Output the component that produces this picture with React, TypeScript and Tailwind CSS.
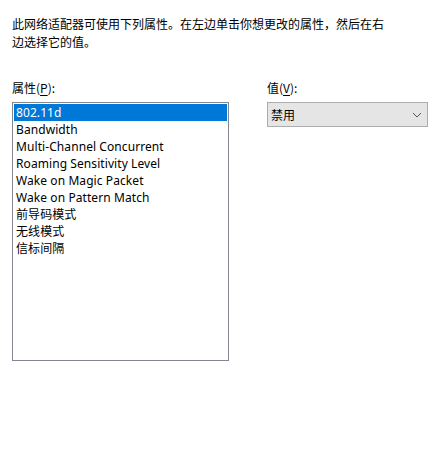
import React from "react";

const font = { fontFamily: '"Noto Sans", "Noto Sans CJK SC", sans-serif' };

const items = [
  "802.11d",
  "Bandwidth",
  "Multi-Channel Concurrent",
  "Roaming Sensitivity Level",
  "Wake on Magic Packet",
  "Wake on Pattern Match",
  "前导码模式",
  "无线模式",
  "信标间隔",
];

export default function App() {
  return (
    <div
      className="w-[441px] h-[463px] bg-white text-black text-[12px] pt-[15px] px-[12px] flex flex-col"
      style={font}
    >
      <div className="leading-[18px] w-[380px] font-['Noto_Sans_CJK_SC',sans-serif]">
        此网络适配器可使用下列属性。在左边单击你想更改的属性，然后在右边选择它的值。
      </div>
      <div className="flex mt-[28px] gap-[38px]">
        <div className="flex flex-col w-[217px]">
          <div className="leading-[18px] h-[18px] mb-[5px] font-['Noto_Sans_CJK_SC',sans-serif]">
            属性(<span className="underline underline-offset-2">P</span>):
          </div>
          <div className="h-[259px] border border-[#828790] px-[1px] pt-[1px] flex flex-col">
            {items.map((it, i) => (
              <div
                key={it}
                className={
                  "h-[17px] leading-[17px] pl-[2px] whitespace-nowrap tracking-[0.08px] " +
                  (i === 0 ? "bg-[#0078d7] text-white" : "")
                }
              >
                {it}
              </div>
            ))}
          </div>
        </div>
        <div className="flex flex-col w-[161px]">
          <div className="leading-[18px] h-[18px] mb-[5px] font-['Noto_Sans_CJK_SC',sans-serif]">
            值(<span className="underline underline-offset-2">V</span>):
          </div>
          <div className="h-[25px] border border-[#adadad] bg-[#e5e5e5] flex items-center justify-between pl-[3px] pr-[5px]">
            <span className="font-['Noto_Sans_CJK_SC',sans-serif] leading-[18px]">禁用</span>
            <svg width="10" height="6" viewBox="0 0 10 6" fill="none">
              <path d="M1 1l4 4 4-4" stroke="#555" strokeWidth="1" />
            </svg>
          </div>
        </div>
      </div>
    </div>
  );
}
